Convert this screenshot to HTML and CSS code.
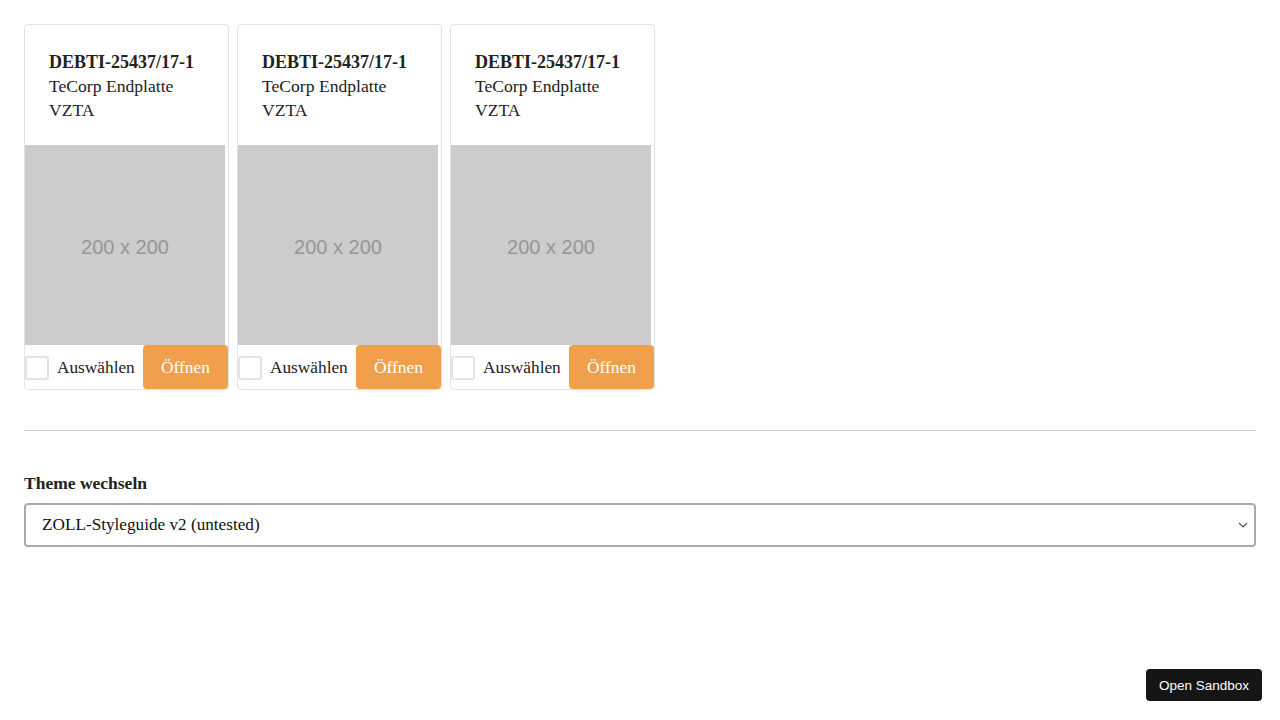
FILE: index.html
```html
<!DOCTYPE html>
<html lang="de">
<head>
<meta charset="utf-8">
<title>Produkte</title>
<link rel="stylesheet" href="styles.css">
</head>
<body>
<main class="page">
  <section class="cards">
    <article class="card">
      <div class="card-head">
        <div class="card-title">DEBTI-25437/17-1</div>
        <div class="card-desc">TeCorp Endplatte VZTA</div>
      </div>
      <div class="placeholder">200 x 200</div>
      <div class="card-foot">
        <label class="select"><span class="box"></span><span>Auswählen</span></label>
        <button class="open">Öffnen</button>
      </div>
    </article>
    <article class="card">
      <div class="card-head">
        <div class="card-title">DEBTI-25437/17-1</div>
        <div class="card-desc">TeCorp Endplatte VZTA</div>
      </div>
      <div class="placeholder">200 x 200</div>
      <div class="card-foot">
        <label class="select"><span class="box"></span><span>Auswählen</span></label>
        <button class="open">Öffnen</button>
      </div>
    </article>
    <article class="card">
      <div class="card-head">
        <div class="card-title">DEBTI-25437/17-1</div>
        <div class="card-desc">TeCorp Endplatte VZTA</div>
      </div>
      <div class="placeholder">200 x 200</div>
      <div class="card-foot">
        <label class="select"><span class="box"></span><span>Auswählen</span></label>
        <button class="open">Öffnen</button>
      </div>
    </article>
  </section>
  <hr class="divider">
  <section class="theme">
    <div class="theme-label">Theme wechseln</div>
    <div class="theme-select">
      <span>ZOLL-Styleguide v2 (untested)</span>
      <svg class="chev" width="10" height="6" viewBox="0 0 10 6"><path d="M1 1l4 4 4-4" fill="none" stroke="#555" stroke-width="1.2"/></svg>
    </div>
  </section>
</main>
<button class="sandbox">Open Sandbox</button>
</body>
</html>
```
FILE: styles.css
```css
html, body { margin: 0; padding: 0; background: #fff; }
body {
  font-family: "Liberation Serif", Georgia, serif;
  color: #222;
  font-size: 16px;
  line-height: 24px;
}
.page { padding: 24px; }
.cards { display: flex; gap: 8px; }
.card {
  width: 205px;
  box-sizing: border-box;
  border: 1px solid #e3e3e3;
  border-radius: 4px;
  display: flex;
  flex-direction: column;
}
.card-head { padding: 25px 24px 20px 24px; min-height: 75px; }
.card-title { font-weight: bold; font-size: 18px; }
.card-desc { font-size: 17.6px; width: 140px; }
.placeholder {
  width: 200px;
  height: 200px;
  box-sizing: border-box;
  padding-top: 4px;
  background: #ccc;
  color: #969696;
  font-family: "Liberation Sans", Arial, sans-serif;
  font-size: 20px;
  display: flex;
  align-items: center;
  justify-content: center;
}
.card-foot {
  display: flex;
  align-items: center;
  justify-content: space-between;
  height: 44px;
}
.select { display: flex; align-items: center; gap: 8px; font-size: 17.3px; padding-top: 1px; }
.box {
  width: 20px; height: 20px;
  border: 2px solid #e3e3e3;
  border-radius: 3px;
}
.open {
  width: 85px; height: 44px;
  border: 0;
  background: #f0a04b;
  color: #fff;
  border-radius: 4px;
  font-family: "Liberation Serif", Georgia, serif;
  font-size: 17.5px;
  padding: 0;
  margin-right: 0;
}
.divider {
  border: 0;
  border-top: 1px solid #ccc;
  margin: 40px 0 40px 0;
}
.theme-label { font-weight: bold; font-size: 17.5px; margin-bottom: 8px; }
.theme-select {
  height: 44px;
  box-sizing: border-box;
  border: 2px solid #aaa;
  border-radius: 4px;
  display: flex;
  align-items: center;
  justify-content: space-between;
  padding: 0 6px 0 16px;
  font-size: 17.2px;
  color: #111;
}
.sandbox {
  position: fixed;
  right: 18px;
  bottom: 19px;
  background: #151515;
  color: #fff;
  border: 0;
  border-radius: 4px;
  height: 32px;
  padding: 0 13px;
  font-family: "Liberation Sans", Arial, sans-serif;
  font-size: 13.5px;
}
```
